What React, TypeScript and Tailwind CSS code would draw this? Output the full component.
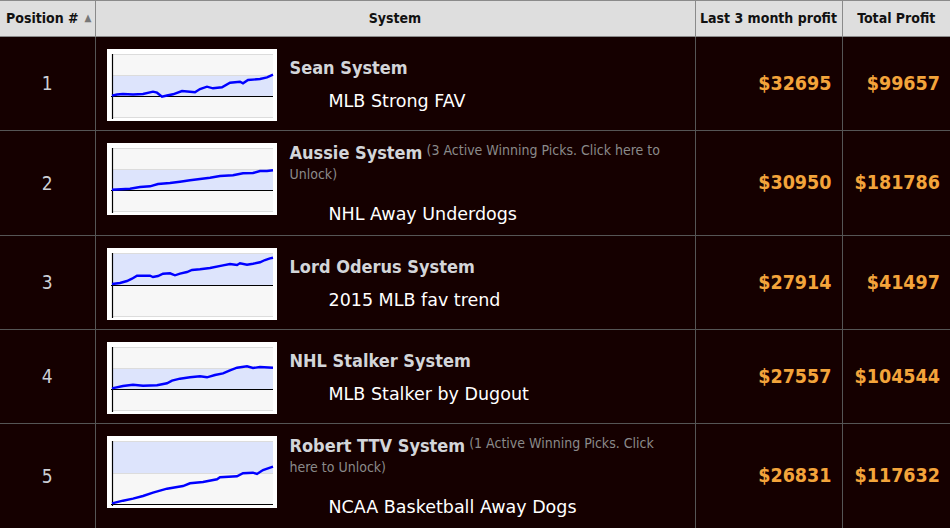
import React from 'react';

type Pt = [number, number];

interface Row {
  pos: number;
  name: string;
  locked?: string;
  sub: string;
  last3: string;
  total: string;
  band: [number, number];
  zero: number;
  line: Pt[];
}

const rows: Row[] = [
  {
    pos: 1, name: 'Sean System', sub: 'MLB Strong FAV', last3: '$32695', total: '$99657',
    band: [26, 47], zero: 47,
    line: [[5, 46.7], [10, 45.5], [16, 45], [26, 45.5], [36, 45], [46, 42.7], [50, 43.7], [55, 47.7], [60, 46.5], [66, 45.3], [75, 42], [88, 43.3], [93, 40], [100, 37.7], [106, 39.3], [115, 38.3], [123, 33.7], [133, 32.7], [136, 34.3], [141, 31], [153, 30], [160, 28.3], [166, 25.7]],
  },
  {
    pos: 2, name: 'Aussie System', locked: '(3 Active Winning Picks. Click here to Unlock)', sub: 'NHL Away Underdogs', last3: '$30950', total: '$181786',
    band: [26, 47], zero: 47,
    line: [[5, 46.7], [23, 45.7], [33, 44], [43, 43.3], [51, 41], [63, 40], [73, 38.7], [83, 37.3], [93, 36], [103, 34.7], [113, 33], [126, 32.3], [136, 30.3], [146, 30], [153, 28], [160, 28], [166, 27.3]],
  },
  {
    pos: 3, name: 'Lord Oderus System', sub: '2015 MLB fav trend', last3: '$27914', total: '$41497',
    band: [5, 37], zero: 37,
    line: [[5, 36], [13, 35], [20, 33], [25, 30.7], [30, 27.7], [43, 27.7], [46, 29], [51, 28], [56, 25.7], [63, 25.3], [68, 27.3], [73, 25.7], [80, 24], [85, 22], [93, 21.3], [103, 20], [116, 17.3], [123, 16], [130, 17], [133, 15.3], [140, 16.7], [146, 15.7], [153, 14.3], [158, 12], [163, 10.3], [166, 9.7]],
  },
  {
    pos: 4, name: 'NHL Stalker System', sub: 'MLB Stalker by Dugout', last3: '$27557', total: '$104544',
    band: [26, 47], zero: 47,
    line: [[5, 46.3], [16, 44], [26, 42.7], [36, 43.7], [50, 43.3], [60, 41.3], [65, 38.7], [73, 36.7], [83, 35.3], [93, 34.3], [100, 35.3], [108, 33], [116, 31.3], [123, 28.3], [130, 25.7], [140, 24.3], [146, 26], [153, 25], [166, 25.7]],
  },
  {
    pos: 5, name: 'Robert TTV System', locked: '(1 Active Winning Picks. Click here to Unlock)', sub: 'NCAA Basketball Away Dogs', last3: '$26831', total: '$117632',
    band: [5, 37], zero: 68,
    line: [[5, 67.3], [16, 64.7], [26, 62.7], [36, 60], [46, 56.7], [60, 52.7], [76, 50], [83, 47.3], [96, 46], [110, 43.3], [113, 41.3], [130, 40.3], [136, 37.3], [146, 36.7], [150, 38], [156, 34], [166, 30.7]],
  },
];

const font = { fontFamily: '"DejaVu Sans Condensed", "Liberation Sans", sans-serif' };
const wideFont = { fontFamily: '"DejaVu Sans", "Liberation Sans", sans-serif' };

const Chart: React.FC<{ row: Row }> = ({ row }) => (
  <svg width="170" height="72" viewBox="0 0 170 72" className="block">
    <rect x="0" y="0" width="170" height="72" fill="#ffffff" />
    <rect x="5" y="5" width="161" height="63" fill="#f7f7f7" />
    <rect x="5" y={row.band[0]} width="161" height={row.band[1] - row.band[0]} fill="#dde4fc" />
    <line x1="5" y1="5.5" x2="166" y2="5.5" stroke="#dcdcdc" />
    <line x1="5" y1={row.band[0] + 0.5} x2="166" y2={row.band[0] + 0.5} stroke="#dcdcdc" />
    <line x1="5" y1={row.band[1] + 0.5} x2="166" y2={row.band[1] + 0.5} stroke="#dcdcdc" />
    <line x1="5" y1="68.5" x2="166" y2="68.5" stroke="#dcdcdc" />
    <line x1="4" y1={row.zero + 0.5} x2="166" y2={row.zero + 0.5} stroke="#000000" strokeWidth="1.2" />
    <line x1="5.5" y1="5" x2="5.5" y2="70" stroke="#000000" strokeWidth="1.2" />
    <polyline
      points={row.line.map(p => p.join(',')).join(' ')}
      fill="none"
      stroke="#0000ff"
      strokeWidth="2.4"
      strokeLinejoin="miter"
    />
  </svg>
);

export default function App() {
  return (
    <div className="w-[950px] h-[528px] overflow-hidden bg-[#150000]" style={font}>
      <table className="w-[950px] table-fixed border-collapse">
        <colgroup>
          <col className="w-[95px]" />
          <col className="w-[600px]" />
          <col className="w-[147px]" />
          <col className="w-[108px]" />
        </colgroup>
        <thead>
          <tr className="h-[36px] bg-[#dedede] text-[14px] font-bold text-[#111]">
            <th className="border border-l-0 border-[#8a8a8a] text-left pl-[6px] font-bold">
              Position #<span className="text-[10px] text-[#777] align-[2px] ml-[6px]">▲</span>
            </th>
            <th className="border border-[#8a8a8a] font-bold">System</th>
            <th className="border border-[#8a8a8a] font-bold">Last 3 month profit</th>
            <th className="border border-r-0 border-[#8a8a8a] font-bold">Total Profit</th>
          </tr>
        </thead>
        <tbody>
          {rows.map(row => (
            <tr key={row.pos}>
              <td className="border border-l-0 border-[#555] text-center text-[19px] text-[#cdd0d6]">{row.pos}</td>
              <td className="border border-[#555] p-0">
                <div className="flex min-h-[93px]">
                  <div className="self-start mt-[12px] mb-[9px] ml-[11px] shrink-0">
                    <Chart row={row} />
                  </div>
                  <div className="self-center pt-[10px] pb-[9px] pl-[13px] pr-[26px] flex-1">
                    <div className="leading-[23px]">
                      <span className="text-[18px] font-bold text-[#d3d5d9]">{row.name}</span>
                      {row.locked && (
                        <span className="align-top text-[14px] leading-[18px] text-[#8a8a8a]"> {row.locked}</span>
                      )}
                    </div>
                    <div
                      className={`${row.locked ? 'mt-[14px]' : 'mt-[9px]'} pl-[39px] text-[17.5px] leading-[24px] text-white`}
                      style={wideFont}
                    >
                      {row.sub}
                    </div>
                  </div>
                </div>
              </td>
              <td className="border border-[#555] text-right pr-[10px] text-[19.5px] font-bold text-[#f3a43b]">{row.last3}</td>
              <td className="border border-r-0 border-[#555] text-right pr-[10px] text-[19.5px] font-bold text-[#f3a43b]">{row.total}</td>
            </tr>
          ))}
        </tbody>
      </table>
    </div>
  );
}
